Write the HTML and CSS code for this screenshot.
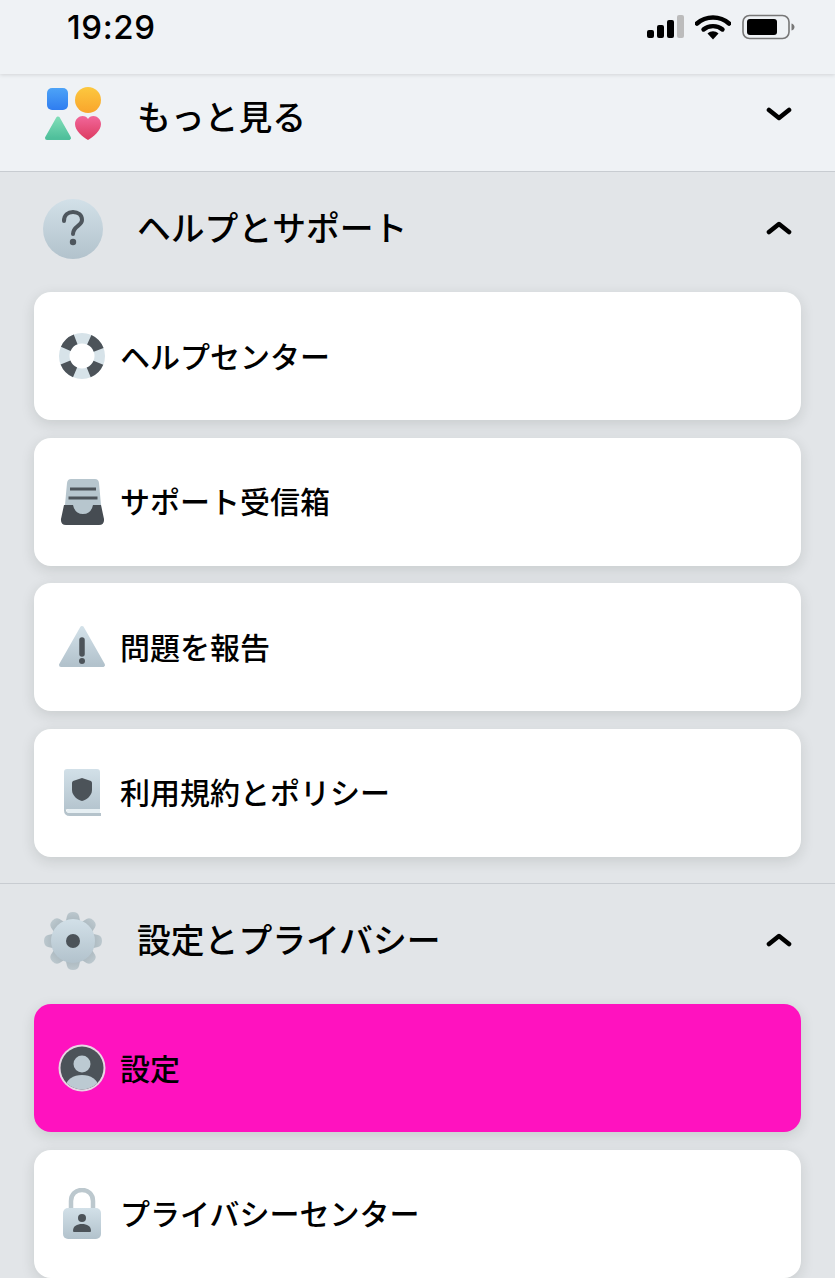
FILE: index.html
```html
<!DOCTYPE html>
<html lang="ja">
<head>
    <meta charset="UTF-8">
    <meta name="viewport" content="width=device-width, initial-scale=1.0">
    <title>メニュー</title>
    <link rel="stylesheet" href="styles.css">
</head>
<body>

    <div class="status-bar">
        <span class="time">19:29</span>
        <div class="status-icons">
            <svg width="38" height="26" viewBox="0 0 38 26">
                <rect x="1" y="16" width="7" height="8" rx="2" fill="#000"/>
                <rect x="11" y="11" width="7" height="13" rx="2" fill="#000"/>
                <rect x="21" y="6" width="7" height="18" rx="2" fill="#000"/>
                <rect x="31" y="1" width="7" height="23" rx="2" fill="#bcbcbc"/>
            </svg>
            <svg width="36" height="26" viewBox="0 0 36 26">
                <path d="M2 9.500C11 1.500 25 1.500 34 9.500" fill="none" stroke="#000" stroke-width="4.600" stroke-linecap="round"/>
                <path d="M8.500 15.500C13.500 11 22.500 11 27.500 15.500" fill="none" stroke="#000" stroke-width="4.400" stroke-linecap="round"/>
                <path d="M12.500 19.500C16 16.500 20 16.500 23.500 19.500L18 25.500Z" fill="#000"/>
            </svg>
            <svg width="53" height="26" viewBox="0 0 53 26">
                <rect x="1" y="1.500" width="46" height="23" rx="6.500" fill="none" stroke="#777" stroke-width="1.600"/>
                <rect x="5" y="5" width="30" height="16" rx="3" fill="#000"/>
                <path d="M49.500 9.500C51.500 10 52.500 11.500 52.500 13S51.500 16 49.500 16.500Z" fill="#777"/>
            </svg>
        </div>
    </div>

    <div class="more-section">
        <div class="section-header">
            <svg class="section-icon icon-apps" width="60" height="56" viewBox="0 0 60 56">
                <defs>
                    <linearGradient id="gradBlue" x1="0" y1="0" x2="0" y2="1"><stop offset="0" stop-color="#4da3f7"/><stop offset="1" stop-color="#2f7df0"/></linearGradient>
                    <linearGradient id="gradYellow" x1="0" y1="0" x2="0" y2="1"><stop offset="0" stop-color="#fcc83f"/><stop offset="1" stop-color="#f9a52c"/></linearGradient>
                    <linearGradient id="gradGreen" x1="0" y1="0" x2="0" y2="1"><stop offset="0" stop-color="#7ddcb6"/><stop offset="1" stop-color="#4fbf9b"/></linearGradient>
                    <linearGradient id="gradPink" x1="0" y1="0" x2="0" y2="1"><stop offset="0" stop-color="#f2679a"/><stop offset="1" stop-color="#dc3a60"/></linearGradient>
                </defs>
                <rect x="4" y="2" width="21" height="22" rx="5" fill="url(#gradBlue)"/>
                <circle cx="45" cy="14" r="13" fill="url(#gradYellow)"/>
                <path d="M15 32.500L26 52H4Z" fill="url(#gradGreen)" stroke="url(#gradGreen)" stroke-width="4" stroke-linejoin="round"/>
                <path d="M45 54C40 51 32 45 32 38C32 33 36 30 39.500 30C42 30 44 31 45 33C46 31 48 30 50.500 30C54 30 58 33 58 38C58 45 50 51 45 54Z" fill="url(#gradPink)"/>
            </svg>
            <span class="section-title section-title-more">もっと見る</span>
            <svg class="chevron chevron-down" width="26" height="14" viewBox="0 0 26 14"><path d="M3 3L13 11L23 3" fill="none" stroke="#000" stroke-width="4.600" stroke-linecap="round" stroke-linejoin="round"/></svg>
        </div>
    </div>

    <div class="section section-help">
        <div class="section-header">
            <svg class="section-icon" width="60" height="60" viewBox="0 0 60 60">
                <defs>
                    <linearGradient id="gradSteel" x1="0" y1="0" x2="0" y2="1"><stop offset="0" stop-color="#d2e0e8"/><stop offset="1" stop-color="#b2c2cc"/></linearGradient>
                    <linearGradient id="gradTooth" x1="0" y1="0" x2="0" y2="1"><stop offset="0" stop-color="#bcc8ce"/><stop offset="1" stop-color="#a6b3ba"/></linearGradient>
                </defs>
                <circle cx="30" cy="30" r="30" fill="url(#gradSteel)"/>
                <path d="M21 22C21 16 25 13 30 13C35 13 39 16 39 21C39 27 30 27 30 35" fill="none" stroke="#4e565d" stroke-width="4" stroke-linecap="round"/>
                <circle cx="30" cy="43" r="3.200" fill="#4e565d"/>
            </svg>
            <span class="section-title">ヘルプとサポート</span>
            <svg class="chevron" width="26" height="14" viewBox="0 0 26 14"><path d="M3 11L13 3L23 11" fill="none" stroke="#000" stroke-width="4.600" stroke-linecap="round" stroke-linejoin="round"/></svg>
        </div>

        <div class="card-list">
            <div class="card">
                <svg class="card-icon" width="48" height="48" viewBox="0 0 48 48">
                    <circle cx="24" cy="24" r="17.750" fill="none" stroke="#d7e3e9" stroke-width="10.500"/>
                    <circle cx="24" cy="24" r="17.750" fill="none" stroke="#4c5359" stroke-width="10.500" stroke-dasharray="13.940 13.940" transform="rotate(22.500 24 24)"/>
                </svg>
                <span class="card-label">ヘルプセンター</span>
            </div>
            <div class="card">
                <svg class="card-icon" width="48" height="48" viewBox="0 0 48 48">
                    <path d="M9 5Q9.500 1 13 1H37Q40.500 1 41 5L44 38H6Z" fill="#b7c6ce"/>
                    <path d="M12 11H38M10.500 20H39.500" stroke="#4c5359" stroke-width="3"/>
                    <path d="M6 27H15Q17 36 25 36Q33 36 35 27H43L46 41Q46.500 47 41 47H8Q2.500 47 3 41Z" fill="#464c52"/>
                </svg>
                <span class="card-label">サポート受信箱</span>
            </div>
            <div class="card">
                <svg class="card-icon" width="48" height="48" viewBox="0 0 48 48">
                    <path d="M24 5L45 42H3Z" fill="url(#gradSteel)" stroke="url(#gradSteel)" stroke-width="4" stroke-linejoin="round"/>
                    <path d="M24 17V31" stroke="#4c5359" stroke-width="5.500" stroke-linecap="round"/>
                    <circle cx="24" cy="38" r="3" fill="#4c5359"/>
                </svg>
                <span class="card-label">問題を報告</span>
            </div>
            <div class="card">
                <svg class="card-icon" width="48" height="48" viewBox="0 0 48 48">
                    <path d="M6 3Q6 0 9 0H39Q42 0 42 3V40H11Q6 40 6 44Z" fill="url(#gradSteel)"/>
                    <path d="M6 41Q6 47 12 47H43V44H12Q8 44 8 41Z" fill="#b5c3cb"/>
                    <path d="M11 40H42V44H12Q8 44 9 41Z" fill="#e6eff3"/>
                    <path d="M24 9L33 12Q34 13 34 14V21C34 27 28 31 24 32C20 31 14 27 14 21V14Q14 13 15 12Z" fill="#4c5359"/>
                </svg>
                <span class="card-label">利用規約とポリシー</span>
            </div>
        </div>
    </div>

    <div class="section section-settings">
        <div class="section-header">
            <svg class="section-icon" width="60" height="60" viewBox="0 0 60 60">
                <g fill="url(#gradTooth)">
                    <path d="M24 5Q25 1 30 1Q35 1 36 5L38 14H22Z"/>
                    <path d="M24 5Q25 1 30 1Q35 1 36 5L38 14H22Z" transform="rotate(45 30 30)"/>
                    <path d="M24 5Q25 1 30 1Q35 1 36 5L38 14H22Z" transform="rotate(90 30 30)"/>
                    <path d="M24 5Q25 1 30 1Q35 1 36 5L38 14H22Z" transform="rotate(135 30 30)"/>
                    <path d="M24 5Q25 1 30 1Q35 1 36 5L38 14H22Z" transform="rotate(180 30 30)"/>
                    <path d="M24 5Q25 1 30 1Q35 1 36 5L38 14H22Z" transform="rotate(225 30 30)"/>
                    <path d="M24 5Q25 1 30 1Q35 1 36 5L38 14H22Z" transform="rotate(270 30 30)"/>
                    <path d="M24 5Q25 1 30 1Q35 1 36 5L38 14H22Z" transform="rotate(315 30 30)"/>
                </g>
                <circle cx="30" cy="30" r="22" fill="url(#gradSteel)"/>
                <circle cx="30" cy="30" r="7" fill="#4c5359"/>
            </svg>
            <span class="section-title">設定とプライバシー</span>
            <svg class="chevron" width="26" height="14" viewBox="0 0 26 14"><path d="M3 11L13 3L23 11" fill="none" stroke="#000" stroke-width="4.600" stroke-linecap="round" stroke-linejoin="round"/></svg>
        </div>

        <div class="card-list">
            <div class="card card-active">
                <svg class="card-icon" width="48" height="48" viewBox="0 0 48 48">
                    <defs><clipPath id="avatarClip"><circle cx="24" cy="24" r="21.500"/></clipPath></defs>
                    <circle cx="24" cy="24" r="23.500" fill="#e9d5e4"/>
                    <circle cx="24" cy="24" r="21.500" fill="#4c5359"/>
                    <circle cx="24" cy="20" r="8.500" fill="#bccad2"/>
                    <ellipse cx="24" cy="42" rx="16" ry="11" fill="#bccad2" clip-path="url(#avatarClip)"/>
                </svg>
                <span class="card-label">設定</span>
            </div>
            <div class="card">
                <svg class="card-icon" width="48" height="52" viewBox="0 0 48 52">
                    <path d="M13 24V13C13 6 18 2 24 2C30 2 35 6 35 13V24" fill="none" stroke="#bcc8ce" stroke-width="4.500"/>
                    <rect x="5" y="20" width="38" height="31" rx="5" fill="url(#gradSteel)"/>
                    <circle cx="24" cy="30" r="4" fill="#4c5359"/>
                    <path d="M15 43C15 38 19 36 24 36C29 36 33 38 33 43Q33 44 32 44H16Q15 44 15 43Z" fill="#4c5359"/>
                </svg>
                <span class="card-label">プライバシーセンター</span>
            </div>
        </div>
    </div>

</body>
</html>
```

FILE: styles.css
```css
html, body {
    margin: 0;
    height: 1278px;
    overflow: hidden;
}
body {
    font-family: "Noto Sans CJK JP", "Noto Sans", sans-serif;
    background-color: #e2e5e8;
    color: #000;
}
.status-bar {
    height: 74px;
    padding: 0 40px 20px 67px;
    display: flex;
    align-items: center;
    justify-content: space-between;
    background-color: #eff2f5;
    box-shadow: 0 1px 4px rgba(0, 0, 0, 0.12);
    position: relative;
    box-sizing: border-box;
}
.time {
    font-family: Inter, "Liberation Sans", sans-serif;
    font-size: 33px;
    font-weight: 500;
    letter-spacing: 0.6px;
}
.status-icons {
    display: flex;
    align-items: center;
    gap: 11px;
}
.more-section {
    height: 97px;
    box-sizing: border-box;
    padding-bottom: 15px;
    display: flex;
    align-items: center;
    background-color: #eff2f5;
}
.section {
    border-top: 1px solid #c8ccd1;
}
.section-help {
    padding-bottom: 26.5px;
}
.section-header {
    width: 100%;
    height: 113px;
    padding: 0 43px;
    box-sizing: border-box;
    display: flex;
    align-items: center;
}
.more-section .section-header {
    height: auto;
}
.section-icon {
    flex: none;
    margin-right: 35px;
}
.icon-apps {
    margin-top: -2px;
}
.section-title {
    flex: 1;
    font-size: 33.8px;
    font-weight: 500;
    line-height: 1.2;
    margin-left: -1px;
    margin-top: -2px;
}
.section-title-more {
    margin-top: 2px;
}
.chevron {
    flex: none;
    margin-top: -2px;
}
.chevron-down {
    margin-top: -3px;
}
.card-list {
    margin-top: 7px;
    padding: 0 34px;
    display: flex;
    flex-direction: column;
    gap: 17.5px;
}
.card {
    height: 128px;
    padding-left: 24px;
    box-sizing: border-box;
    display: flex;
    align-items: center;
    gap: 14px;
    flex: none;
    background-color: #fff;
    border-radius: 17px;
    box-shadow: 0 4px 14px rgba(30, 40, 30, 0.13);
}
.card-active {
    background-color: #ff12bf;
}
.card-icon {
    flex: none;
}
.card-label {
    font-size: 30px;
    font-weight: 500;
    line-height: 1.2;
    margin-top: -3px;
}
```
